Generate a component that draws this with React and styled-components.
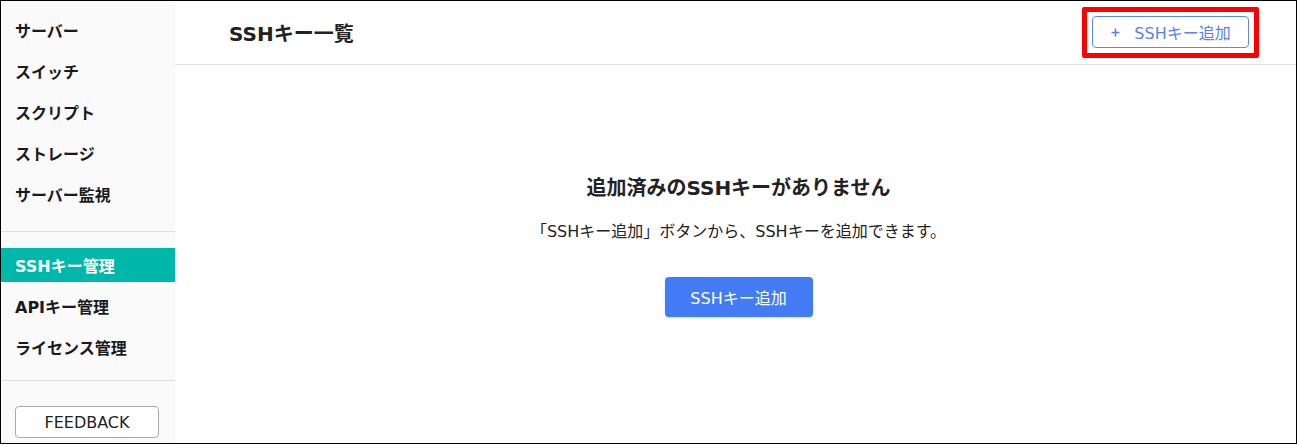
import React from "react";
import styled, { createGlobalStyle } from "styled-components";

const FONT = `"DejaVu Sans", "Noto Sans CJK JP", sans-serif`;

const Global = createGlobalStyle`
  html, body { margin: 0; padding: 0; background: #fff; }
  body { font-family: ${FONT}; color: #222; }
  * { box-sizing: border-box; }
`;

const Frame = styled.div`
  width: 1297px;
  height: 444px;
  border: 1px solid #000;
  display: flex;
  overflow: hidden;
`;

const Sidebar = styled.nav`
  width: 174px;
  flex: none;
  background: #fafafa;
  display: flex;
  flex-direction: column;
`;

const Group = styled.ul`
  list-style: none;
  margin: 0;
  padding: ${(p) => p.$pad};
  display: flex;
  flex-direction: column;
  gap: 7px;
  border-bottom: 1px solid #e0e0e0;
`;

const Item = styled.li`
  height: 34px;
  display: flex;
  align-items: center;
  padding-left: 14px;
  font-size: 16px;
  font-weight: 700;
  color: ${(p) => (p.$active ? "#fff" : "#1a1a1a")};
  background: ${(p) => (p.$active ? "#00b8a9" : "transparent")};
  white-space: nowrap;
`;

const FeedbackWrap = styled.div`
  padding: 25px 0 0 14px;
`;

const FeedbackButton = styled.button`
  width: 144px;
  height: 32px;
  border: 1px solid #aaa;
  border-radius: 4px;
  background: #fff;
  font-family: ${FONT};
  font-size: 16px;
  color: #222;
  padding: 0;
`;

const Main = styled.main`
  flex: 1;
  display: flex;
  flex-direction: column;
  min-width: 0;
`;

const Header = styled.header`
  height: 64px;
  flex: none;
  border-bottom: 1px solid #e0e0e0;
  display: flex;
  align-items: center;
  justify-content: space-between;
  padding: 0 37px 0 54px;
`;

const Title = styled.h1`
  margin: 0;
  font-size: 20px;
  font-weight: 700;
  color: #222;
`;

const Highlight = styled.div`
  border: 5px solid #ff0000;
  border-radius: 2px;
  padding: 4px 5px 5px;
  display: flex;
`;

const OutlineButton = styled.button`
  width: 157px;
  height: 32px;
  border: 1px solid #5b8af5;
  border-radius: 4px;
  background: #fff;
  color: #5a7ff2;
  font-family: ${FONT};
  font-size: 16px;
  display: flex;
  align-items: center;
  justify-content: center;
  gap: 14px;
  padding: 0 0 0 1px;
`;

const PlusIcon = styled.svg`
  width: 9px;
  height: 9px;
  flex: none;
`;

const Empty = styled.section`
  display: flex;
  flex-direction: column;
  align-items: center;
  padding-top: 108px;
  padding-left: 6px;
`;

const EmptyTitle = styled.h2`
  margin: 0;
  font-size: 20px;
  line-height: 30px;
  font-weight: 700;
  color: #222;
`;

const EmptyText = styled.p`
  margin: 17px 0 0;
  font-size: 16px;
  line-height: 24px;
  color: #222;
`;

const PrimaryButton = styled.button`
  margin-top: 33px;
  width: 148px;
  height: 40px;
  border: none;
  border-radius: 4px;
  background: #437bf5;
  color: #fff;
  font-family: ${FONT};
  font-size: 16px;
  box-shadow: 0 1px 2px rgba(67, 123, 245, 0.25);
  padding: 0;
`;

const top = ["サーバー", "スイッチ", "スクリプト", "ストレージ", "サーバー監視"];
const bottom = ["SSHキー管理", "APIキー管理", "ライセンス管理"];

export default function App() {
  return (
    <>
      <Global />
      <Frame>
        <Sidebar>
          <Group $pad="12px 0 20px">
            {top.map((t) => (
              <Item key={t}>{t}</Item>
            ))}
          </Group>
          <Group $pad="16px 0 16px">
            {bottom.map((t, i) => (
              <Item key={t} $active={i === 0}>
                {t}
              </Item>
            ))}
          </Group>
          <FeedbackWrap>
            <FeedbackButton>FEEDBACK</FeedbackButton>
          </FeedbackWrap>
        </Sidebar>
        <Main>
          <Header>
            <Title>SSHキー一覧</Title>
            <Highlight>
              <OutlineButton>
                <PlusIcon viewBox="0 0 9 9" aria-hidden="true">
                  <path d="M4.5 0.5V8.5M0.5 4.5H8.5" stroke="currentColor" strokeWidth="1.6" fill="none" />
                </PlusIcon>
                SSHキー追加
              </OutlineButton>
            </Highlight>
          </Header>
          <Empty>
            <EmptyTitle>追加済みのSSHキーがありません</EmptyTitle>
            <EmptyText>「SSHキー追加」ボタンから、SSHキーを追加できます。</EmptyText>
            <PrimaryButton>SSHキー追加</PrimaryButton>
          </Empty>
        </Main>
      </Frame>
    </>
  );
}
